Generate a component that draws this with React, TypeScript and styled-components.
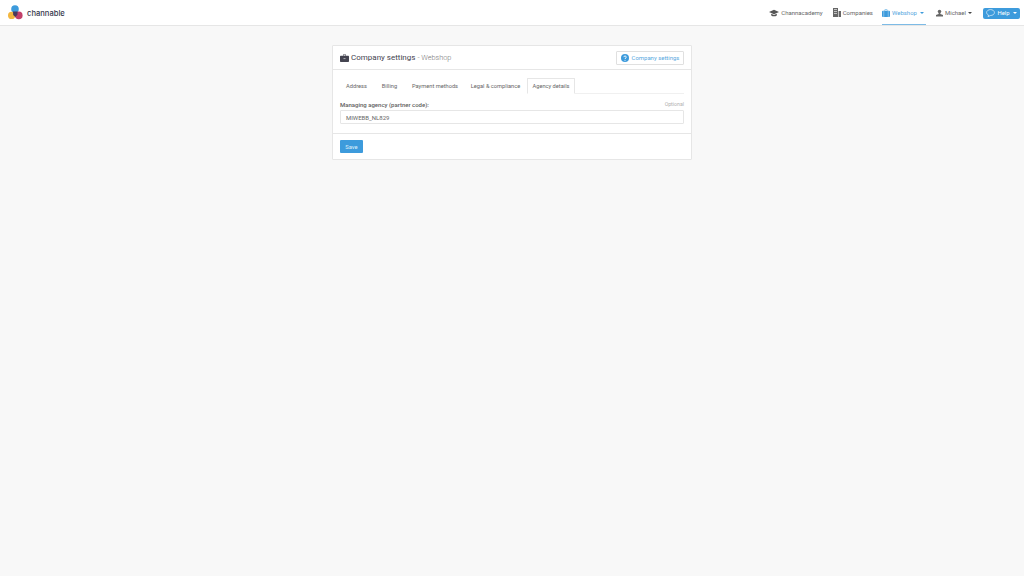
import React from "react";
import styled, { createGlobalStyle } from "styled-components";

const Global = createGlobalStyle`
  html, body { margin: 0; padding: 0; background: #f8f8f8; }
  body { font-family: Roboto, "Liberation Sans", sans-serif; color: #444; width: 1024px; height: 576px; overflow: hidden; }
  * { box-sizing: border-box; }
`;

const Navbar = styled.header`
  height: 26px;
  background: #fff;
  border-bottom: 1px solid #e6e6e6;
  display: flex;
  align-items: center;
  justify-content: space-between;
  padding: 0 4px 0 8px;
`;
const Brand = styled.div`
  display: flex;
  align-items: center;
  gap: 4px;
  font-family: Inter, Roboto, sans-serif;
  font-size: 7.6px;
  font-weight: 500;
  color: #34364a;
`;
const BrandName = styled.span`
  padding-top: 1px;
`;
const NavList = styled.nav`
  display: flex;
  align-items: stretch;
  height: 25px;
`;
const NavItem = styled.div<{ $active?: boolean; $ml?: number; $gap?: number }>`
  display: flex;
  align-items: center;
  gap: ${(p) => p.$gap ?? 2}px;
  height: 25px;
  padding-top: 1px;
  padding-right: ${(p) => (p.$active ? 2 : 0)}px;
  margin-left: ${(p) => p.$ml ?? 0}px;
  font-size: 6px;
  color: ${(p) => (p.$active ? "#58a8e0" : "#666")};
  border-bottom: 1px solid ${(p) => (p.$active ? "#7dbbe6" : "transparent")};
`;
const Caret = styled.span<{ $color?: string; $ml?: number }>`
  width: 0;
  height: 0;
  border-left: 2px solid transparent;
  border-right: 2px solid transparent;
  border-top: 2px solid ${(p) => p.$color ?? "#444"};
  margin-left: ${(p) => p.$ml ?? 1}px;
`;
const HelpButton = styled.div`
  align-self: center;
  margin-top: 1px;
  margin-left: 11px;
  width: 37px;
  height: 11px;
  background: #3d9bdc;
  border-radius: 2px;
  color: #fff;
  font-size: 5.9px;
  display: flex;
  align-items: center;
  justify-content: center;
  gap: 2px;
`;
const Main = styled.main`
  display: flex;
  justify-content: center;
  padding-top: 19px;
`;
const Panel = styled.section`
  width: 360px;
  height: 115px;
  background: #fff;
  border: 1px solid #e6e6e6;
  border-radius: 1px;
`;
const PanelHeader = styled.div`
  height: 24px;
  border-bottom: 1px solid #e6e6e6;
  display: flex;
  align-items: center;
  justify-content: space-between;
  padding: 0 7px;
`;
const Title = styled.h1`
  margin: 0;
  font-size: 8px;
  font-weight: 400;
  color: #444450;
  display: flex;
  align-items: center;
  gap: 2px;
`;
const Sub = styled.span`
  font-size: 7.3px;
  font-weight: 300;
  color: #777;
`;
const OutlineButton = styled.div`
  width: 68px;
  height: 14px;
  border: 1px solid #e0e0e0;
  border-radius: 1px;
  display: flex;
  align-items: center;
  justify-content: center;
  gap: 3px;
  color: #58a8e0;
  font-size: 5.95px;
`;
const Body = styled.div`
  height: 64px;
  padding: 8px 7px 0;
  border-bottom: 1px solid #e6e6e6;
`;
const Tabs = styled.div`
  display: flex;
  height: 16px;
  border-bottom: 1px solid #f0f0f0;
`;
const Tab = styled.div<{ $active?: boolean; $w: number }>`
  width: ${(p) => p.$w}px;
  height: 16px;
  display: flex;
  align-items: center;
  justify-content: center;
  font-size: 5.7px;
  color: #666;
  background: #fff;
  ${(p) =>
    p.$active
      ? "border: 1px solid #e6e6e6; border-bottom: 1px solid #fff; border-radius: 1px 1px 0 0;"
      : ""}
`;
const LabelRow = styled.div`
  display: flex;
  justify-content: space-between;
  align-items: center;
  height: 10px;
  margin-top: 5px;
`;
const Label = styled.label`
  font-size: 6px;
  font-weight: 500;
  color: #606060;
`;
const Optional = styled.span`
  font-size: 5.2px;
  color: #b0b0b0;
`;
const Input = styled.div`
  height: 14px;
  margin-top: 1px;
  border: 1px solid #e6e6e6;
  border-radius: 1px;
  padding-left: 5px;
  display: flex;
  align-items: center;
  font-size: 6px;
  color: #666;
`;
const Footer = styled.div`
  padding: 6px 7px 0;
`;
const SaveButton = styled.div`
  width: 23px;
  height: 13px;
  background: #3d9bdc;
  border-radius: 1px;
  color: #dff0fb;
  font-size: 5.8px;
  display: flex;
  align-items: center;
  justify-content: center;
`;

const Logo = () => (
  <svg width="15" height="15" viewBox="0 0 15 15">
    <circle cx="7" cy="4" r="3.8" fill="#3d9bdc" />
    <circle cx="3.6" cy="10.4" r="3.6" fill="#f3b73f" />
    <circle cx="10.8" cy="10.4" r="3.8" fill="#c2406a" />
    <path d="M5 6.5 L9.6 6.5 L9.4 9.8 L7.3 12 L5.2 10 Z" fill="#4a3a5c" />
  </svg>
);
const Cap = () => (
  <svg width="10" height="8" viewBox="0 0 10 8"><path d="M5 .8 10 3 5 5.2 0 3Z M2.2 4.8 5 6 7.8 4.8V6.4C6.5 7.6 3.5 7.6 2.2 6.4Z" fill="#555" /></svg>
);
const Building = () => (
  <svg width="8" height="9" viewBox="0 0 8 9"><path d="M0 0H5V9H0Z M5.6 3H8V9H5.6Z" fill="#666" /><path d="M1 1.5H4M1 3.5H4M1 5.5H4" stroke="#fff" strokeWidth=".6" /></svg>
);
const Case = ({ color, width = 8, stripes = true }: { color: string; width?: number; stripes?: boolean }) => (
  <svg width={width} height="8" viewBox="0 0 9 8" preserveAspectRatio="none"><path d="M3 1.8V.6H6V1.8H8C8.6 1.8 9 2.2 9 2.8V7C9 7.6 8.6 8 8 8H1C.4 8 0 7.6 0 7V2.8C0 2.2.4 1.8 1 1.8Z" fill={color} /><path d="M3.5 1.8V1.1H5.5V1.8Z" fill="#fff" />{stripes ? <path d="M2 1.8V8M7 1.8V8" stroke="#fff" strokeWidth=".4" /> : <path d="M3.5 4.6H5.5" stroke="#fff" strokeWidth=".6" />}</svg>
);
const User = () => (
  <svg width="7" height="8" viewBox="0 0 8 8"><circle cx="4" cy="2.2" r="2" fill="#666" /><path d="M3 4H5V5L8 6.2V8H0V6.2L3 5Z" fill="#666" /></svg>
);
const Bubble = () => (
  <svg width="9" height="8" viewBox="0 0 9 8"><path d="M4.5.6C6.6.6 8.4 1.8 8.4 3.6S6.6 6.5 4.5 6.5L2 7.6 2.5 6C1.3 5.5.6 4.6.6 3.6.6 1.8 2.4.6 4.5.6Z" fill="none" stroke="#fff" strokeWidth=".6" /></svg>
);
const Question = () => (
  <svg width="8" height="8" viewBox="0 0 8 8"><circle cx="4" cy="4" r="4" fill="#3d9bdc" /><path d="M2.8 3.1C2.8 1.6 5.3 1.6 5.3 3.1 5.3 4 4 4 4 5" fill="none" stroke="#fff" strokeWidth=".9" /><circle cx="4" cy="6.2" r=".55" fill="#fff" /></svg>
);

export default function App() {
  return (
    <>
      <Global />
      <Navbar>
        <Brand>
          <Logo />
          <BrandName>channable</BrandName>
        </Brand>
        <NavList>
          <NavItem><Cap />Channacademy</NavItem>
          <NavItem $ml={10}><Building />Companies</NavItem>
          <NavItem $active $ml={9}><Case color="#3d9bdc" />Webshop<Caret $color="#3d9bdc" /></NavItem>
          <NavItem $ml={10}><User />Michael<Caret $ml={0} /></NavItem>
          <HelpButton><Bubble />Help<Caret $color="#fff" /></HelpButton>
        </NavList>
      </Navbar>
      <Main>
        <Panel>
          <PanelHeader>
            <Title><Case color="#444450" width={9} stripes={false} />Company settings<Sub>- Webshop</Sub></Title>
            <OutlineButton><Question />Company settings</OutlineButton>
          </PanelHeader>
          <Body>
            <Tabs>
              <Tab $w={33}>Address</Tab>
              <Tab $w={33}>Billing</Tab>
              <Tab $w={58}>Payment methods</Tab>
              <Tab $w={63}>Legal &amp; compliance</Tab>
              <Tab $active $w={48}>Agency details</Tab>
            </Tabs>
            <LabelRow>
              <Label>Managing agency (partner code):</Label>
              <Optional>Optional</Optional>
            </LabelRow>
            <Input>MIWEBB_NL829</Input>
          </Body>
          <Footer>
            <SaveButton>Save</SaveButton>
          </Footer>
        </Panel>
      </Main>
    </>
  );
}
